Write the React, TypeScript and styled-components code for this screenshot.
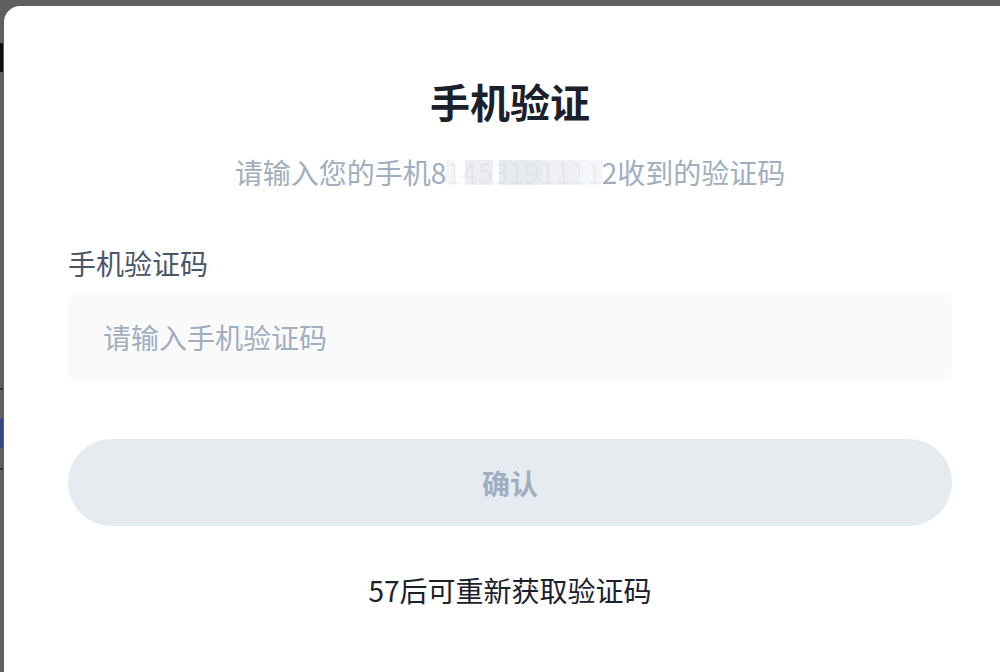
import React from "react";
import styled, { createGlobalStyle } from "styled-components";

const Global = createGlobalStyle`
  html, body { margin: 0; padding: 0; }
  body {
    width: 1000px;
    height: 672px;
    overflow: hidden;
    background: #5f5f5f;
    font-family: "Noto Sans CJK SC", "Noto Sans", sans-serif;
  }
`;

const Page = styled.div`
  width: 1000px;
  height: 672px;
  display: flex;
  flex-direction: column;
  padding-top: 43px;
  box-sizing: border-box;
`;

const BehindMark = styled.div<{ $h: number; $mt: number; $c: string }>`
  width: 3px;
  height: ${(p) => p.$h}px;
  margin-top: ${(p) => p.$mt}px;
  background: ${(p) => p.$c};
`;

const Overlay = styled.div`
  position: fixed;
  inset: 0;
`;

const Modal = styled.div`
  position: absolute;
  left: 4px;
  top: 6px;
  width: 1012px;
  height: 690px;
  box-sizing: border-box;
  background: #ffffff;
  border-radius: 16px;
  padding: 67px 64px 0;
  display: flex;
  flex-direction: column;
`;

const Title = styled.h1`
  margin: 0;
  text-align: center;
  font-size: 40px;
  line-height: 56px;
  font-weight: 700;
  color: #1a202c;
`;

const Subtitle = styled.p`
  margin: 25px 0 0;
  text-align: center;
  font-size: 28px;
  line-height: 36px;
  color: #a0aec0;
  white-space: nowrap;
`;

const Masked = styled.span`
  color: rgba(160, 174, 192, 0.12);
  background: linear-gradient(
    90deg,
    #f4f5f7 0 6%,
    #ffffff 6% 12%,
    #eceef1 12% 30%,
    #ffffff 30% 34%,
    #e8ebee 34% 62%,
    #eef0f3 62% 84%,
    #f5f6f8 84% 100%
  );
  background-size: 100% 62%;
  background-position: 0 55%;
  background-repeat: no-repeat;
`;

const Label = styled.label`
  display: block;
  margin-top: 53px;
  font-size: 28px;
  line-height: 40px;
  color: #4a5568;
`;

const Input = styled.input`
  margin-top: 10px;
  height: 87px;
  box-sizing: border-box;
  width: 100%;
  border: 1px solid #fafafa;
  border-radius: 8px;
  background: #fafafa;
  padding: 0 34px;
  font-family: inherit;
  font-size: 28px;
  color: #1a202c;
  outline: none;
  &::placeholder {
    color: #a0aec0;
  }
`;

const ConfirmButton = styled.button`
  margin-top: 59px;
  height: 87px;
  width: 100%;
  border: none;
  border-radius: 44px;
  background: #e6ebf0;
  color: #a0aec0;
  font-family: inherit;
  font-size: 28px;
  font-weight: 700;
  cursor: not-allowed;
`;

const Resend = styled.p`
  margin: 46px 0 0;
  text-align: center;
  font-size: 28px;
  line-height: 36px;
  color: #1a202c;
`;

export default function App() {
  return (
    <>
      <Global />
      <Page>
        <BehindMark $h={29} $mt={0} $c="#111" />
        <BehindMark $h={2} $mt={316} $c="#333" />
        <BehindMark $h={30} $mt={28} $c="#3a4680" />
        <BehindMark $h={2} $mt={20} $c="#333" />
      </Page>
      <Overlay>
        <Modal>
          <Title>手机验证</Title>
          <Subtitle>
            请输入您的手机8<Masked>1453191111</Masked>2收到的验证码
          </Subtitle>
          <Label htmlFor="code">手机验证码</Label>
          <Input id="code" placeholder="请输入手机验证码" />
          <ConfirmButton disabled>确认</ConfirmButton>
          <Resend>57后可重新获取验证码</Resend>
        </Modal>
      </Overlay>
    </>
  );
}
